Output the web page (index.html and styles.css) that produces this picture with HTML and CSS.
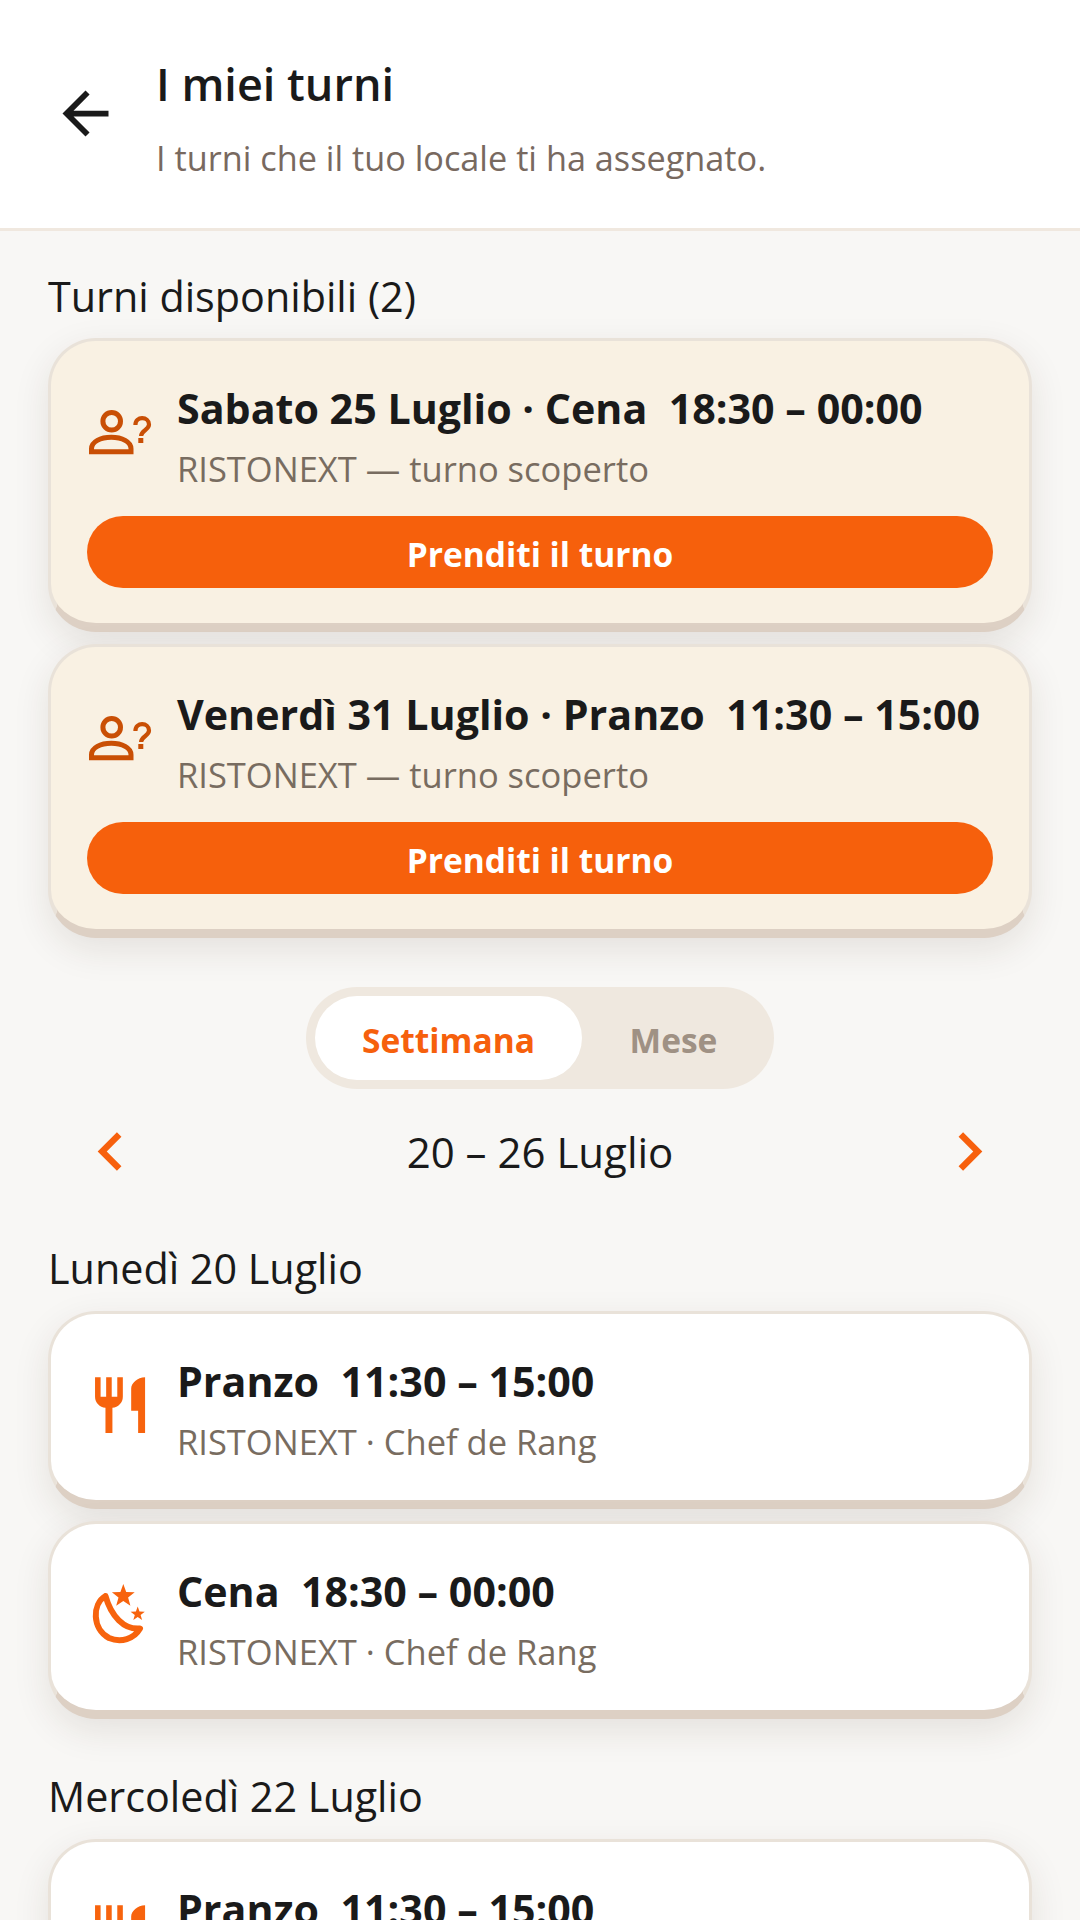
FILE: index.html
```html
<!DOCTYPE html>
<html lang="it">
<head>
<meta charset="utf-8">
<title>I miei turni</title>
<link rel="stylesheet" href="styles.css">
</head>
<body>
<header class="topbar">
  <button class="back" aria-label="Indietro">
    <svg viewBox="0 0 24 24" class="back-icon"><path d="M20 11H7.830l5.590-5.590L12 4l-8 8 8 8 1.410-1.410L7.830 13H20v-2z" fill="#1a1a1a"/></svg>
  </button>
  <div class="topbar-text">
    <h1 class="title">I miei turni</h1>
    <p class="subtitle">I turni che il tuo locale ti ha assegnato.</p>
  </div>
</header>
<main class="content">
  <h2 class="section first">Turni disponibili (2)</h2>
  <div class="stack">
    <article class="card open">
      <div class="row">
        <svg class="icon" viewBox="0 0 72 72"><use href="#ask"/></svg>
        <div class="info">
          <div class="name">Sabato 25 Luglio · Cena&nbsp; 18:30 – 00:00</div>
          <div class="meta">RISTONEXT — turno scoperto</div>
        </div>
      </div>
      <button class="take">Prenditi il turno</button>
    </article>
    <article class="card open">
      <div class="row">
        <svg class="icon" viewBox="0 0 72 72"><use href="#ask"/></svg>
        <div class="info">
          <div class="name">Venerdì 31 Luglio · Pranzo&nbsp; 11:30 – 15:00</div>
          <div class="meta">RISTONEXT — turno scoperto</div>
        </div>
      </div>
      <button class="take">Prenditi il turno</button>
    </article>
  </div>
  <div class="toggle-wrap">
    <div class="toggle">
      <span class="seg active">Settimana</span>
      <span class="seg">Mese</span>
    </div>
  </div>
  <nav class="week">
    <svg class="chev" viewBox="0 0 24 24"><path d="M15.410 7.410 14 6l-6 6 6 6 1.410-1.410L10.830 12z" fill="#f7600d"/></svg>
    <span class="range">20 – 26 Luglio</span>
    <svg class="chev" viewBox="0 0 24 24"><path d="M10 6 8.590 7.410 13.170 12l-4.580 4.590L10 18l6-6z" fill="#f7600d"/></svg>
  </nav>
  <h2 class="section">Lunedì 20 Luglio</h2>
  <div class="stack">
    <article class="card">
      <div class="row">
        <svg class="icon" viewBox="0 0 72 72"><use href="#fork"/></svg>
        <div class="info">
          <div class="name">Pranzo&nbsp; 11:30 – 15:00</div>
          <div class="meta">RISTONEXT · Chef de Rang</div>
        </div>
      </div>
    </article>
    <article class="card">
      <div class="row">
        <svg class="icon" viewBox="0 0 72 72"><use href="#moon"/></svg>
        <div class="info">
          <div class="name">Cena&nbsp; 18:30 – 00:00</div>
          <div class="meta">RISTONEXT · Chef de Rang</div>
        </div>
      </div>
    </article>
  </div>
  <h2 class="section">Mercoledì 22 Luglio</h2>
  <div class="stack">
    <article class="card">
      <div class="row">
        <svg class="icon" viewBox="0 0 72 72"><use href="#fork"/></svg>
        <div class="info">
          <div class="name">Pranzo&nbsp; 11:30 – 15:00</div>
          <div class="meta">RISTONEXT · Chef de Rang</div>
        </div>
      </div>
    </article>
  </div>
</main>
<svg class="defs" width="0" height="0" aria-hidden="true">
  <defs>
    <g id="ask">
      <circle cx="24.700" cy="20.300" r="8.800" fill="none" stroke="#c94f05" stroke-width="5"/>
      <path d="M4.500 50.700v-3c0-7 9-11.500 19.750-11.500S44 40.700 44 47.700v3z" fill="none" stroke="#c94f05" stroke-width="5"/>
      <path d="M48.400 24c0-9.500 13.600-8.500 13.600-.5 0 5.500-7.900 6-7.900 11.500" fill="none" stroke="#c94f05" stroke-width="4.200"/>
      <rect x="51.300" y="37" width="5" height="5" fill="#c94f05"/>
    </g>
    <path id="fork" transform="translate(-0.3 -2.200) scale(2.780)" fill="#f7630d" d="M11 9H9V2H7v7H5V2H3v7c0 2.120 1.660 3.840 3.750 3.970V22h2.500v-9.030C11.340 12.840 13 11.120 13 9V2h-2v7zm5-3v8h2.500v8H21V2c-2.760 0-5 2.240-5 4z"/>
    <g id="moon" fill="#f7630d">
      <path d="M18.500 12C5 20 5 45 22 54c12 5 25 1 31-9.500C37 46 24 32 18.500 12z" fill="none" stroke="#f7630d" stroke-width="6" stroke-linejoin="round"/>
      <path d="M36.300 0 39.200 8l8.500.3-6.600 5.200 2.300 8.200-7.100-4.700-7.100 4.700 2.300-8.200-6.600-5.200 8.500-.3z"/>
      <path d="M50.700 22.500l1.800 5 5.300.2-4.200 3.300 1.500 5.100-4.400-3-4.400 3 1.500-5.100-4.200-3.300 5.300-.2z"/>
    </g>
  </defs>
</svg>
</body>
</html>
```
FILE: styles.css
```css
* { box-sizing: border-box; }
html, body { margin: 0; padding: 0; }
html { height: 1920px; overflow: hidden; }
body {
  width: 1080px;
  height: 1920px;
  overflow: hidden;
  background: #f8f7f5;
  font-family: "Open Sans", "Noto Sans", sans-serif;
  color: #1a1a1a;
}
.topbar {
  height: 231px;
  background: #fff;
  border-bottom: 3px solid #f0e8df;
  display: flex;
  align-items: flex-start;
  padding: 54px 48px 0 51px;
  gap: 36px;
}
.back {
  width: 69px;
  height: 69px;
  margin-top: 25px;
  padding: 0;
  border: 0;
  background: none;
  display: flex;
}
.back-icon { width: 69px; height: 69px; }
.title {
  margin: 0;
  font-size: 45px;
  line-height: 60px;
  font-weight: 600;
}
.subtitle {
  margin: 22px 0 0;
  font-size: 34.250px;
  line-height: 44px;
  color: #78695f;
}
.content { padding: 0 48px; }
.section {
  margin: 0;
  font-size: 41.300px;
  font-weight: 500;
  line-height: 54px;
  padding-top: 50px;
  padding-bottom: 16px;
}
.section.first { padding: 38px 0 15px; }
.stack { display: flex; flex-direction: column; gap: 12px; }
.card {
  background: #fff;
  border: 3px solid #e9e2d9;
  border-bottom-color: #ddd0c4;
  border-bottom-width: 9px;
  border-radius: 48px;
  box-shadow: 0 12px 36px rgba(60, 40, 20, 0.1);
  padding: 40px 36px 0;
  height: 198px;
  width: 984px;
}
.card.open {
  background: #f9f1e3;
  height: 294px;
}
.row { display: flex; align-items: center; gap: 18px; }
.icon { width: 72px; height: 72px; flex: none; }
.info { min-width: 0; }
.name {
  font-size: 41.200px;
  line-height: 54px;
  font-weight: 700;
  white-space: nowrap;
}
.meta {
  font-size: 34.500px;
  line-height: 48px;
  margin-top: 10px;
  color: #786c60;
  white-space: nowrap;
}
.take {
  display: block;
  width: 906px;
  height: 72px;
  margin-top: 23px;
  padding: 3px 0 0;
  border: 0;
  border-radius: 36px;
  background: #f6600c;
  color: #fff;
  font: 700 33.500px "Open Sans", "Noto Sans", sans-serif;
}
.toggle-wrap { display: flex; justify-content: center; margin-top: 49px; }
.toggle {
  width: 468px;
  height: 102px;
  padding: 9px;
  border-radius: 51px;
  background: #efe8df;
  display: flex;
}
.seg {
  flex: 1;
  border-radius: 42px;
  display: flex;
  align-items: center;
  justify-content: center;
  padding-top: 3px;
  font-size: 33.500px;
  font-weight: 700;
  color: #9f9184;
}
.seg.active { flex: none; width: 267px; background: #fff; color: #f6600c; }
.week {
  display: flex;
  align-items: center;
  justify-content: space-between;
  padding: 0 24px;
  height: 77px;
  margin-top: 24px;
  margin-bottom: 1px;
}
.chev { width: 77px; height: 77px; }
.range { font-size: 42px; }
.defs { position: absolute; }
```
